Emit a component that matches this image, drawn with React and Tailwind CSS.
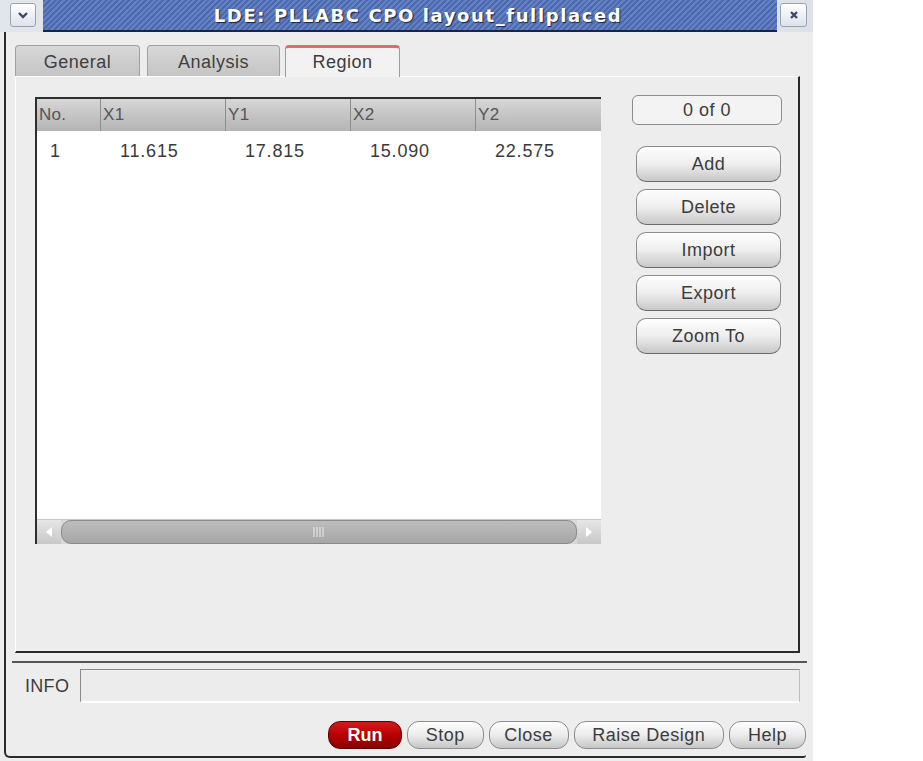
import React from 'react';

const cols = [
  { key: 'no', label: 'No.', w: 'w-[63px]', pad: 'pl-[13px]' },
  { key: 'x1', label: 'X1', w: 'w-[125px]', pad: 'pl-[20px]' },
  { key: 'y1', label: 'Y1', w: 'w-[125px]', pad: 'pl-[20px]' },
  { key: 'x2', label: 'X2', w: 'w-[125px]', pad: 'pl-[20px]' },
  { key: 'y2', label: 'Y2', w: 'w-[125px]', pad: 'pl-[20px]' },
];

const rows = [{ no: '1', x1: '11.615', y1: '17.815', x2: '15.090', y2: '22.575' }];

const sideButtons = ['Add', 'Delete', 'Import', 'Export', 'Zoom To'];

const SideButton = ({ label }) => (
  <button className="h-[36px] w-[145px] rounded-[10px] border border-[#8c8c8c] border-b-[#6a6a6a] bg-gradient-to-b from-[#fefefe] via-[#eeeeee] to-[#c8c8c8] text-[18px] tracking-[0.5px] text-[#3c3c3c] shadow-[inset_0_1px_0_#fff]">
    {label}
  </button>
);

const BottomButton = ({ label, w, red }) => (
  <button
    className={
      red
        ? `h-[28px] ${w} rounded-[12px] border border-[#5a0000] bg-gradient-to-b from-[#d41a1a] via-[#b80000] to-[#8c0000] text-[18px] font-bold text-white`
        : `h-[28px] ${w} rounded-[12px] border border-[#8c8c8c] bg-gradient-to-b from-[#fefefe] via-[#ececec] to-[#c6c6c6] text-[18px] tracking-[0.5px] text-[#3c3c3c]`
    }
  >
    {label}
  </button>
);

const Tab = ({ label, active, w }) =>
  active ? (
    <div className={`${w} relative z-10 -mb-px flex h-[32px] items-center justify-center rounded-t-[4px] border border-b-0 border-[#9c9c9c] border-t-[3px] border-t-[#e06a6a] bg-[#f2f2f2] text-[18px] tracking-[0.5px] text-[#3c3c3c]`}>
      {label}
    </div>
  ) : (
    <div className={`${w} mt-px flex h-[31px] items-center justify-center rounded-t-[4px] border border-b-0 border-[#a0a0a0] bg-gradient-to-b from-[#d8d8d8] to-[#c4c4c4] pt-[3px] text-[18px] tracking-[0.5px] text-[#404040]`}>
      {label}
    </div>
  );

export default function App() {
  return (
    <div className="min-h-screen bg-white" style={{ fontFamily: '"Liberation Sans", Arial, sans-serif' }}>
      <div className="flex h-[761px] w-[813px] flex-col bg-[#ededed]">
        {/* title bar */}
        <div className="flex h-[32px] shrink-0">
          <div className="flex w-[43px] items-start bg-[#e2e5ea] pl-[10px] pt-[3px]">
            <div className="flex h-[24px] w-[26px] items-center justify-center rounded-[3px] border border-[#9aa2b2] bg-gradient-to-b from-white to-[#dde2ea]">
              <svg width="12" height="8" viewBox="0 0 12 8">
                <path d="M2 2 L6 6 L10 2" stroke="#3c4a6a" strokeWidth="2.4" fill="none" />
              </svg>
            </div>
          </div>
          <div className="flex flex-1 items-center justify-center border-b-2 border-[#1c2540] bg-[repeating-linear-gradient(135deg,#4d6ab0_0px,#4d6ab0_2px,#6481c2_2px,#6481c2_4px)] pl-[16px]">
            <span
              className="text-[18px] font-bold tracking-[1.6px] text-white [text-shadow:1px_1px_1px_#1a2240]"
              style={{ fontFamily: '"DejaVu Sans", sans-serif' }}
            >
              LDE: PLLABC CPO layout_fullplaced
            </span>
          </div>
          <div className="flex w-[36px] items-start bg-[#dde1e8] pl-[3px] pt-[3px]">
            <div className="flex h-[24px] w-[27px] items-center justify-center rounded-[3px] border border-[#9aa2b2] bg-gradient-to-b from-white to-[#dde2ea]">
              <svg width="10" height="10" viewBox="0 0 10 10">
                <path d="M2 2 L8 8 M8 2 L2 8" stroke="#3c4a6a" strokeWidth="2.4" />
              </svg>
            </div>
          </div>
        </div>

        {/* body */}
        <div className="mb-[3px] ml-[4px] mr-[7px] flex flex-1 flex-col rounded-bl-[6px] rounded-br-[3px] border-b-2 border-l-2 border-[#2a2a2a] pl-[9px]">
          {/* tabs */}
          <div className="mt-[12px] flex items-end">
            <Tab label="General" w="w-[125px]" />
            <div className="w-[7px]" />
            <Tab label="Analysis" w="w-[133px]" />
            <div className="w-[5px]" />
            <Tab label="Region" w="w-[115px]" active />
          </div>

          {/* tab panel */}
          <div className="flex h-[577px] w-[785px] gap-[31px] border-b-2 border-l border-r-2 border-t border-b-[#2a2a2a] border-l-white border-r-[#2a2a2a] border-t-white pl-[19px] pt-[20px]">
            {/* table */}
            <div className="flex h-[447px] w-[566px] flex-col border-l-2 border-t-2 border-[#2e2e2e] bg-white">
              <div className="flex h-[32px] shrink-0 bg-gradient-to-b from-[#d6d6d6] to-[#b4b4b4]">
                {cols.map((c, i) => (
                  <div
                    key={c.key}
                    className={`${c.w} flex items-center pl-[2px] text-[17px] tracking-[0.3px] text-[#555] ${i > 0 ? 'border-l border-[#8e8e8e]' : ''}`}
                  >
                    {c.label}
                  </div>
                ))}
              </div>
              <div className="flex-1">
                {rows.map((r) => (
                  <div key={r.no} className="flex h-[40px] items-center">
                    {cols.map((c) => (
                      <div key={c.key} className={`${c.w} ${c.pad} text-[18px] tracking-[0.8px] text-[#3a3a3a]`}>
                        {r[c.key]}
                      </div>
                    ))}
                  </div>
                ))}
              </div>
              {/* horizontal scrollbar */}
              <div className="flex h-[25px] shrink-0 border-t border-[#c8c8c8] bg-[#d8d8d8]">
                <div className="flex w-[24px] items-center justify-center bg-gradient-to-b from-[#e6e6e6] to-[#c8c8c8]">
                  <svg width="8" height="10" viewBox="0 0 8 10">
                    <path d="M7 0 L1 5 L7 10 Z" fill="#fff" />
                  </svg>
                </div>
                <div className="flex flex-1 items-center justify-center rounded-[10px] border border-[#8a8a8a] bg-gradient-to-b from-[#bdbdbd] to-[#a6a6a6]">
                  <svg width="12" height="10" viewBox="0 0 12 10">
                    <path d="M1 0 V10 M4 0 V10 M7 0 V10 M10 0 V10" stroke="#ececec" strokeWidth="1" />
                  </svg>
                </div>
                <div className="flex w-[24px] items-center justify-center bg-gradient-to-b from-[#e6e6e6] to-[#c8c8c8]">
                  <svg width="8" height="10" viewBox="0 0 8 10">
                    <path d="M1 0 L7 5 L1 10 Z" fill="#fff" />
                  </svg>
                </div>
              </div>
            </div>

            {/* right side */}
            <div className="flex flex-col">
              <div className="-mt-[2px] flex h-[30px] w-[150px] items-center justify-center rounded-[6px] border border-[#8c8c8c] bg-[#f3f3f3] text-[18px] tracking-[0.5px] text-[#3c3c3c]">
                0 of 0
              </div>
              <div className="ml-[4px] mt-[21px] flex flex-col gap-[7px]">
                {sideButtons.map((b) => (
                  <SideButton key={b} label={b} />
                ))}
              </div>
            </div>
          </div>

          {/* separator */}
          <div className="-ml-[3px] mt-[8px] h-[2px] w-[795px] bg-[#555]" />

          {/* info */}
          <div className="mt-[6px] flex items-center">
            <span className="ml-[10px] w-[55px] text-[18px] tracking-[0.3px] text-[#3c3c3c]">INFO</span>
            <div className="h-[34px] w-[720px] border-b-2 border-l border-r border-t border-b-white border-l-[#8a8a8a] border-r-[#bdbdbd] border-t-[#8a8a8a] bg-[#ececec]" />
          </div>

          {/* bottom buttons */}
          <div className="mt-[18px] flex gap-[5px] pl-[313px]">
            <BottomButton label="Run" w="w-[74px]" red />
            <BottomButton label="Stop" w="w-[77px]" />
            <BottomButton label="Close" w="w-[80px]" />
            <BottomButton label="Raise Design" w="w-[151px]" />
            <BottomButton label="Help" w="w-[77px]" />
          </div>
        </div>
      </div>
    </div>
  );
}
